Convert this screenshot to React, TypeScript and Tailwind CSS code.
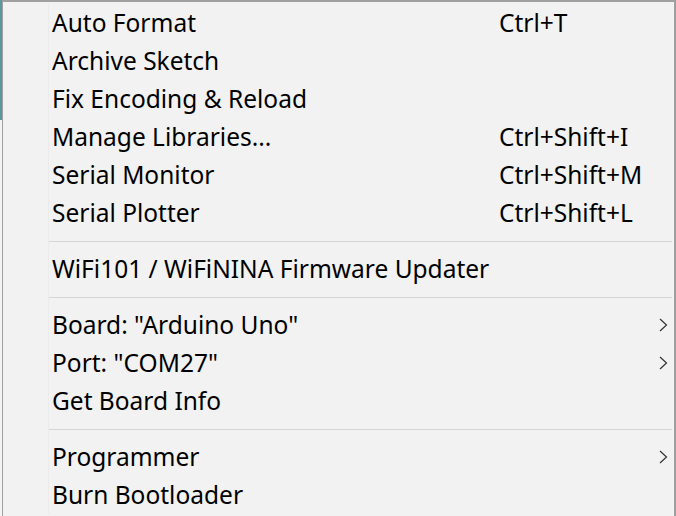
type Item =
  | { kind: "item"; label: string; shortcut?: string; submenu?: boolean }
  | { kind: "sep" };

const items: Item[] = [
  { kind: "item", label: "Auto Format", shortcut: "Ctrl+T" },
  { kind: "item", label: "Archive Sketch" },
  { kind: "item", label: "Fix Encoding & Reload" },
  { kind: "item", label: "Manage Libraries...", shortcut: "Ctrl+Shift+I" },
  { kind: "item", label: "Serial Monitor", shortcut: "Ctrl+Shift+M" },
  { kind: "item", label: "Serial Plotter", shortcut: "Ctrl+Shift+L" },
  { kind: "sep" },
  { kind: "item", label: "WiFi101 / WiFiNINA Firmware Updater" },
  { kind: "sep" },
  { kind: "item", label: 'Board: "Arduino Uno"', submenu: true },
  { kind: "item", label: 'Port: "COM27"', submenu: true },
  { kind: "item", label: "Get Board Info" },
  { kind: "sep" },
  { kind: "item", label: "Programmer", submenu: true },
  { kind: "item", label: "Burn Bootloader" },
];

const Chevron = () => (
  <svg width="9" height="14" viewBox="0 0 9 14" className="ml-auto mr-[6px]" fill="none">
    <path d="M1 1 L7.5 7 L1 13" stroke="#333" strokeWidth="1.2" />
  </svg>
);

export default function App() {
  return (
    <div className="flex h-[516px] w-[676px] overflow-hidden bg-white font-['Noto_Sans',sans-serif]">
      {/* sliver of the window behind the menu */}
      <div className="flex w-[2px] flex-col">
        <div className="h-[120px] bg-[#5a9a9a]" />
        <div className="flex-1 bg-[#f4f4f4]" />
      </div>
      <div className="flex-1 border-t-2 border-r-2 border-l border-[#a0a0a0] bg-[#f2f2f2] pt-[2px]">
        <div className="relative">
          <div className="absolute inset-y-0 left-[45px] w-px bg-[#ebebeb]" />
          {items.map((it, i) =>
            it.kind === "sep" ? (
              <div key={i} className="flex h-[18px] items-center pl-[45px] pr-[2px]">
                <div className="h-px w-full bg-[#d5d5d5]" />
              </div>
            ) : (
              <div key={i} className="flex h-[38px] items-center text-[24.5px] leading-none text-black">
                <span className="pl-[49px]">{it.label}</span>
                {it.shortcut && <span className="ml-auto w-[175px]">{it.shortcut}</span>}
                {it.submenu && <Chevron />}
              </div>
            ),
          )}
        </div>
      </div>
    </div>
  );
}
